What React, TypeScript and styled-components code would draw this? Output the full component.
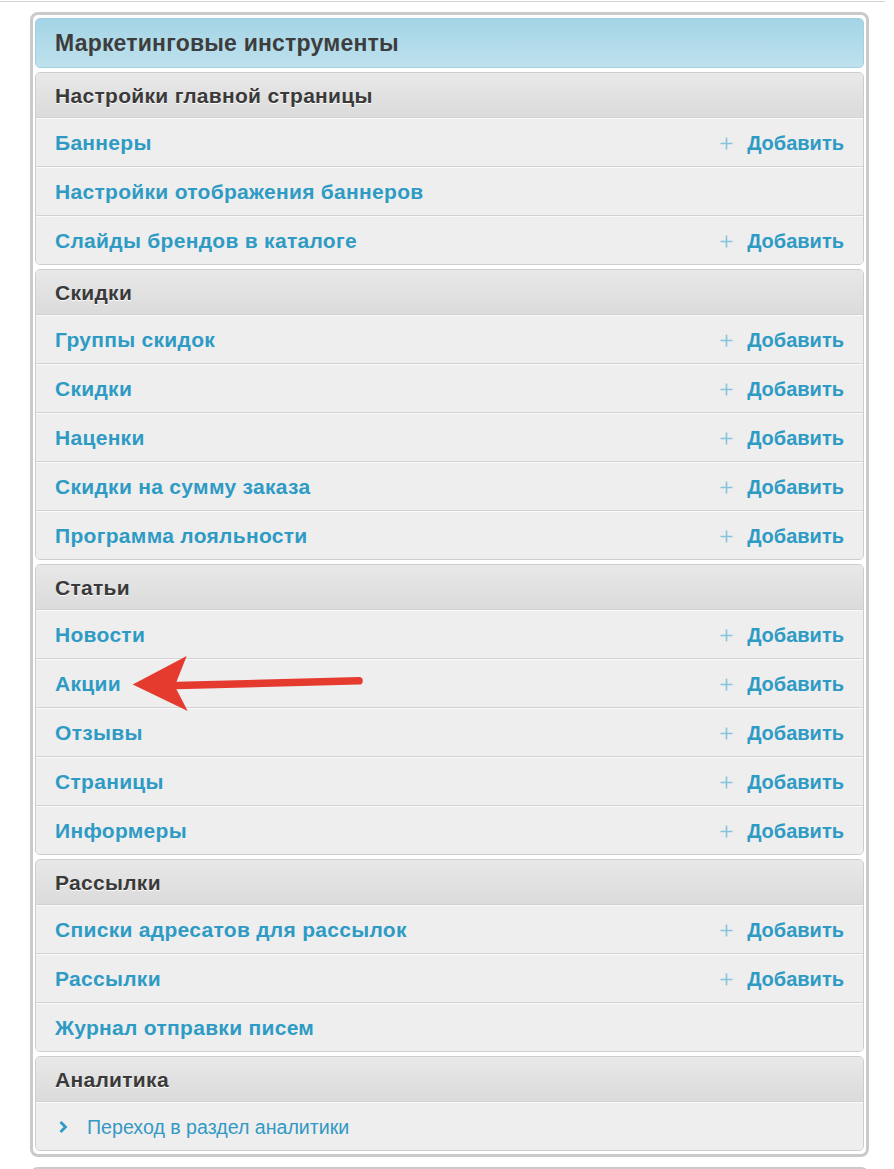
import React from "react";
import styled, { createGlobalStyle } from "styled-components";

const GlobalStyle = createGlobalStyle`
   html, body {
      margin: 0;
      padding: 0;
      background: #ffffff;
   }
   body {
      font-family: "Liberation Sans", Arial, sans-serif;
   }
`;

type Item = { title: string; add?: boolean };
type Group = { title: string; items: Item[] };

const groups: Group[] = [
   {
      title: "Настройки главной страницы",
      items: [
         { title: "Баннеры", add: true },
         { title: "Настройки отображения баннеров" },
         { title: "Слайды брендов в каталоге", add: true },
      ],
   },
   {
      title: "Скидки",
      items: [
         { title: "Группы скидок", add: true },
         { title: "Скидки", add: true },
         { title: "Наценки", add: true },
         { title: "Скидки на сумму заказа", add: true },
         { title: "Программа лояльности", add: true },
      ],
   },
   {
      title: "Статьи",
      items: [
         { title: "Новости", add: true },
         { title: "Акции", add: true },
         { title: "Отзывы", add: true },
         { title: "Страницы", add: true },
         { title: "Информеры", add: true },
      ],
   },
   {
      title: "Рассылки",
      items: [
         { title: "Списки адресатов для рассылок", add: true },
         { title: "Рассылки", add: true },
         { title: "Журнал отправки писем" },
      ],
   },
];

function App() {
   return (
      <Page>
         <GlobalStyle />
         <TopLine />
         <Panel>
            <TitleBar>Маркетинговые инструменты</TitleBar>
            {groups.map((g) => (
               <Section key={g.title}>
                  <SectionHeader>{g.title}</SectionHeader>
                  {g.items.map((item) => (
                     <Row key={item.title}>
                        <RowLink>{item.title}</RowLink>
                        {item.add && (
                           <AddLink>
                              <svg width="13" height="13" viewBox="0 0 13 13">
                                 <path d="M6.5 0.5v12M0.5 6.5h12" stroke="#86c4db" strokeWidth="1.6" fill="none" />
                              </svg>
                              Добавить
                           </AddLink>
                        )}
                     </Row>
                  ))}
               </Section>
            ))}
            <Section>
               <SectionHeader>Аналитика</SectionHeader>
               <Row>
                  <PlainLink>
                     <svg width="10" height="14" viewBox="0 0 10 14">
                        <path d="M2.5 2l5 5-5 5" stroke="#2e9bc5" strokeWidth="2.8" fill="none" />
                     </svg>
                     Переход в раздел аналитики
                  </PlainLink>
               </Row>
            </Section>
         </Panel>
         <NextPanel />
         <Arrow width="250" height="75" viewBox="0 0 250 75">
            <path d="M57 40.5L239 35.8" stroke="#e53b2f" strokeWidth="7.5" strokeLinecap="round" fill="none" />
            <path d="M12.7 39.5L66.7 11L56 38L56 43.5L67.7 66Z" fill="#e53b2f" />
         </Arrow>
      </Page>
   );
}

export default App;

const Page = styled.div`
   position: relative;
   width: 894px;
   padding-top: 1px;
`;

const TopLine = styled.div`
   width: 885px;
   border-top: 1px solid #d4d4d4;
`;

const Panel = styled.div`
   box-sizing: border-box;
   margin: 10px 0 0 30px;
   width: 839px;
   border: 3px solid #cacaca;
   border-radius: 8px;
   padding: 3px 2px;
   display: flex;
   flex-direction: column;
   gap: 4px;
`;

const TitleBar = styled.div`
   box-sizing: border-box;
   height: 50px;
   display: flex;
   align-items: center;
   padding-left: 19px;
   border-radius: 5px;
   border: 1px solid #a3d1e2;
   background: linear-gradient(#a3d4e6, #bfe1ed);
   color: #3d3d3d;
   font-size: 23px;
   letter-spacing: 0.2px;
   font-weight: bold;
`;

const Section = styled.div`
   border: 1px solid #cdcdcd;
   border-radius: 5px;
   overflow: hidden;
   background: #eeeeee;
`;

const SectionHeader = styled.div`
   height: 44px;
   display: flex;
   align-items: center;
   padding: 2px 0 0 19px;
   box-sizing: border-box;
   background: linear-gradient(#e8e8e8, #dbdbdb);
   color: #3a3a3a;
   font-size: 21px;
   letter-spacing: 0.3px;
   font-weight: bold;
   text-shadow: 0 1px 0 #ffffff;
`;

const Row = styled.div`
   box-sizing: border-box;
   height: 49px;
   display: flex;
   align-items: center;
   justify-content: space-between;
   padding: 2px 19px 0;
   border-top: 1px solid #d2d2d2;
   box-shadow: inset 0 1px 0 #fafafa;
   background: #eeeeee;
`;

const RowLink = styled.span`
   color: #2e9bc5;
   font-size: 21px;
   letter-spacing: 0.3px;
   font-weight: bold;
`;

const AddLink = styled.span`
   display: flex;
   align-items: center;
   gap: 14px;
   color: #2e9bc5;
   font-size: 20px;
   font-weight: bold;
`;

const PlainLink = styled.span`
   display: flex;
   align-items: center;
   gap: 19px;
   padding-left: 3px;
   color: #3399c4;
   font-size: 19.6px;
`;

const NextPanel = styled.div`
   box-sizing: border-box;
   margin: 10px 0 0 30px;
   width: 839px;
   height: 10px;
   border: 3px solid #cacaca;
   border-bottom: none;
   border-radius: 8px 8px 0 0;
`;

const Arrow = styled.svg`
   position: absolute;
   left: 120px;
   top: 645px;
`;
